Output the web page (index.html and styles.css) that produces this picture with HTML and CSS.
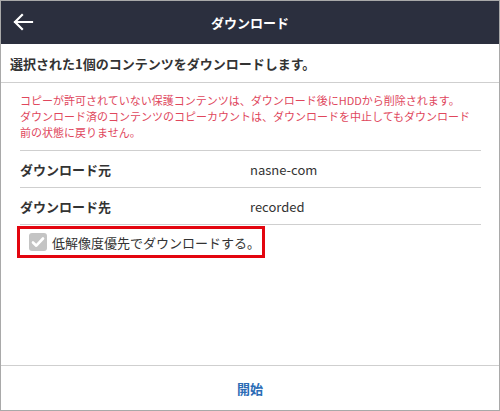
FILE: index.html
```html
<!DOCTYPE html>
<html lang="ja">
<head>
<meta charset="utf-8">
<title>ダウンロード</title>
<link rel="stylesheet" href="styles.css">
</head>
<body>
<div class="frame">
  <header class="topbar">
    <button class="back" aria-label="戻る">
      <svg width="22" height="18" viewBox="0 0 22 18">
        <path d="M20 9H3M10 2L3 9l7 7" fill="none" stroke="#ffffff" stroke-width="2.2" stroke-linecap="square"/>
      </svg>
    </button>
    <h1 class="title">ダウンロード</h1>
  </header>
  <div class="intro">選択された1個のコンテンツをダウンロードします。</div>
  <div class="body">
    <p class="notice">コピーが許可されていない保護コンテンツは、ダウンロード後にHDDから削除されます。<br>ダウンロード済のコンテンツのコピーカウントは、ダウンロードを中止してもダウンロード前の状態に戻りません。</p>
    <div class="row"><span class="label">ダウンロード元</span><span class="value">nasne-com</span></div>
    <div class="row"><span class="label">ダウンロード先</span><span class="value">recorded</span></div>
    <div class="option">
      <span class="check">
        <svg width="18" height="18" viewBox="0 0 18 18">
          <rect x="0" y="0" width="18" height="18" rx="3" fill="#c4c4c4"/>
          <path d="M4 9.5l3.3 3.2L14 5.5" fill="none" stroke="#ffffff" stroke-width="2.6" stroke-linecap="round" stroke-linejoin="round"/>
        </svg>
      </span>
      <span class="option-text">低解像度優先でダウンロードする。</span>
    </div>
  </div>
  <footer class="footer"><span class="start">開始</span></footer>
</div>
</body>
</html>
```

FILE: styles.css
```css
html, body {
  margin: 0;
  padding: 0;
  background: #ffffff;
}
body {
  font-family: "Noto Sans CJK JP", "Noto Sans", sans-serif;
  color: #333333;
}
.frame {
  width: 500px;
  height: 411px;
  box-sizing: border-box;
  border: 1px solid #a9a9a9;
  display: flex;
  flex-direction: column;
  background: #ffffff;
}
.topbar {
  height: 43px;
  flex: none;
  background: #2b2f3e;
  display: flex;
  align-items: center;
  position: relative;
}
.back {
  background: none;
  border: 0;
  padding: 0;
  margin-left: 11px;
  width: 22px;
  height: 18px;
  display: flex;
  margin-top: -1px;
}
.title {
  position: absolute;
  left: 0;
  right: 0;
  top: 0;
  bottom: 0;
  margin: 0;
  display: flex;
  align-items: center;
  justify-content: center;
  color: #ffffff;
  font-size: 13px;
  font-weight: bold;
  pointer-events: none;
}
.intro {
  height: 39px;
  flex: none;
  box-sizing: border-box;
  border-bottom: 1px solid #cfcfcf;
  display: flex;
  align-items: center;
  padding-left: 9px;
  font-size: 13px;
  font-weight: bold;
  color: #333333;
}
.body {
  flex: 1;
  display: flex;
  flex-direction: column;
  padding: 0 18px 0 19px;
}
.notice {
  margin: 0;
  padding: 9px 0 10px 0;
  line-height: 16px;
  font-size: 11px;
  color: #e0475d;
  border-bottom: 1px solid #cfcfcf;
}
.row {
  height: 37px;
  box-sizing: border-box;
  border-bottom: 1px solid #cfcfcf;
  display: grid;
  grid-template-columns: 230px 1fr;
  align-items: center;
  font-size: 13px;
}
.label {
  font-weight: bold;
  color: #333333;
}
.value {
  color: #333333;
}
.option {
  align-self: flex-start;
  margin-left: -3px;
  margin-top: 1px;
  width: 248px;
  height: 32px;
  box-sizing: border-box;
  border: 3px solid #e3050f;
  display: flex;
  align-items: center;
  padding-left: 9px;
  gap: 5px;
}
.check {
  display: flex;
  width: 18px;
  height: 18px;
}
.option-text {
  font-size: 13px;
  color: #333333;
}
.footer {
  height: 45px;
  flex: none;
  box-sizing: border-box;
  border-top: 1px solid #cfcfcf;
  display: flex;
  align-items: center;
  justify-content: center;
}
.start {
  color: #2b6cb6;
  font-size: 13px;
  font-weight: bold;
}
```
